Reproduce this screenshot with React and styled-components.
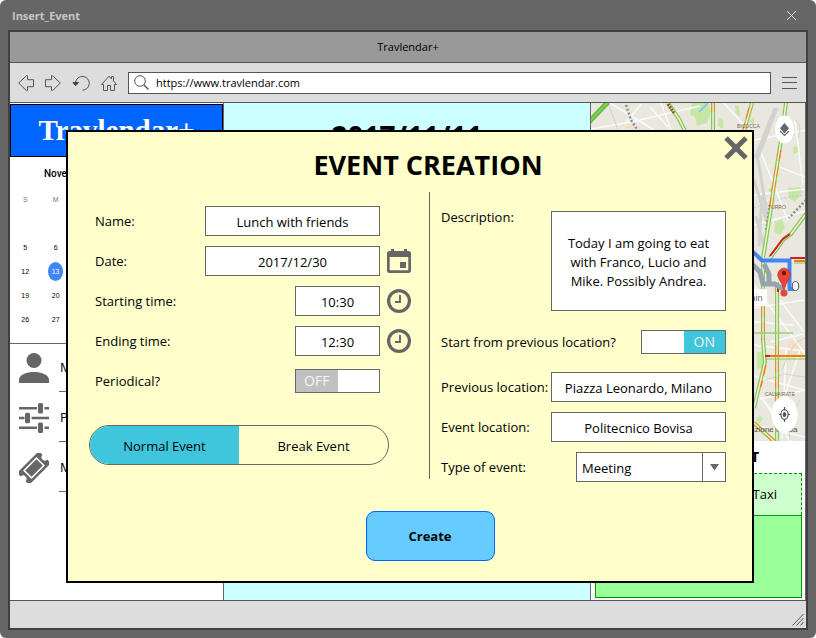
import React, { useState } from "react";
import styled, { createGlobalStyle } from "styled-components";

const INK = "#666666";
const TEAL = "#40c6dc";

const GlobalStyle = createGlobalStyle`
  *, *::before, *::after { box-sizing: border-box; }
  body { margin: 0; background: #ffffff; }
  body, button, input, select, textarea {
    font-family: "Open Sans", "Noto Sans", sans-serif;
    color: #000000;
  }
`;

/* ---------- window frame ---------- */

const Window = styled.div`
  display: flex;
  flex-direction: column;
  min-height: 100vh;
  padding: 0 8px 8px;
  background: ${INK};
  border-radius: 6px;
`;

const TitleBar = styled.header`
  display: flex;
  align-items: center;
  justify-content: space-between;
  height: 30px;
  padding: 0 11px 0 4px;
  color: #c6c6c6;
  font-size: 11px;
  font-weight: 700;
`;

const IconButton = styled.button`
  display: flex;
  padding: 0;
  border: 0;
  background: none;
  cursor: pointer;
`;

const Frame = styled.div`
  display: flex;
  flex: 1;
  flex-direction: column;
  border: 2px solid #404040;
`;

const TabBar = styled.div`
  height: 31px;
  border-bottom: 1px solid #555555;
  background: #999999;
  font-size: 11px;
  line-height: 30px;
  text-align: center;
`;

const Toolbar = styled.nav`
  display: flex;
  align-items: center;
  gap: 11px;
  height: 40px;
  padding: 0 9px 0 8px;
  border-bottom: 1px solid #555555;
  background: #dddddd;
`;

const AddressBar = styled.label`
  display: flex;
  flex: 1;
  align-items: center;
  gap: 7px;
  height: 22px;
  padding-left: 5px;
  border: 1px solid #555555;
  background: #ffffff;
`;

const AddressInput = styled.input`
  flex: 1;
  min-width: 0;
  padding: 0;
  border: 0;
  background: none;
  font-size: 11px;
  line-height: 16px;
  outline: none;
`;

const StatusBar = styled.footer`
  display: flex;
  align-items: flex-end;
  justify-content: flex-end;
  height: 28px;
  padding: 2px;
  border-top: 1px solid #555555;
  background: #dddddd;
`;

/* ---------- page behind the dialog ---------- */

const Page = styled.main`
  position: relative;
  display: grid;
  flex: 1;
  grid-template-columns: 214fr 367fr 215fr;
  background: #ccffff;
`;

const Column = styled.section`
  display: flex;
  flex-direction: column;
  min-width: 0;
  border-right: 1px solid ${INK};
  background: ${(p) => p.$fill || "#ffffff"};
`;

const Brand = styled.div`
  height: 53px;
  margin-top: 1px;
  border: 1px solid #000000;
  background: #0066ff;
  color: #ffffff;
  font-family: "Liberation Serif", serif;
  font-size: 29px;
  font-weight: 700;
  line-height: 51px;
  text-align: center;
`;

const DayTitle = styled.h2`
  margin: 13px 0 0;
  font-size: 28px;
  line-height: 40px;
  text-align: center;
`;

const CalendarPanel = styled.div`
  height: 187px;
  border-bottom: 1px solid ${INK};
`;

const Calendar = styled.table`
  width: 100%;
  border-spacing: 0;
  table-layout: fixed;
  font-family: "Liberation Sans", sans-serif;
  font-size: 7px;
  text-align: center;

  caption {
    height: 30px;
    padding-left: 34px;
    font-family: Roboto, sans-serif;
    font-size: 10px;
    font-weight: 500;
    line-height: 34px;
    text-align: left;
  }
  th { height: 24px; padding: 0; color: #777777; font-weight: 400; }
  td { height: 24px; padding: 0; }
`;

const Today = styled.span`
  display: inline-block;
  width: 15px;
  border-radius: 50%;
  background: #4285f4;
  color: #ffffff;
  line-height: 19px;
`;

const Menu = styled.ul`
  display: flex;
  flex-direction: column;
  gap: 2px;
  margin: 0;
  padding: 0 9px;
  list-style: none;
`;

const MenuItem = styled.li`
  display: flex;
  align-items: center;
  gap: 10px;
  height: 48px;

  a {
    flex: 1;
    padding-left: 1px;
    border-bottom: 1px solid ${INK};
    color: #000000;
    font-size: 13px;
    line-height: 47px;
    text-decoration: none;
  }
`;

const MapArt = styled.svg`
  display: block;
  width: 100%;
  height: 338px;
`;

const PanelTitle = styled.h3`
  margin: 6px 0;
  padding-right: 46px;
  font-size: 14px;
  line-height: 20px;
  text-align: right;
`;

const Transport = styled.div`
  display: flex;
  flex: 1;
  flex-direction: column;
  margin: 0 3px 2px 4px;
`;

const TransportMode = styled.div`
  height: 42px;
  padding-right: 24px;
  border: 1px dashed #009900;
  border-bottom: 0;
  background: #ccffcc;
  font-size: 13px;
  line-height: 40px;
  text-align: right;
`;

const TransportDetail = styled.div`
  flex: 1;
  border: 1px solid #009900;
  background: #99ff99;
`;

/* ---------- dialog ---------- */

const Overlay = styled.div`
  position: absolute;
  inset: 0;
  padding: 27px 52px 17px 56px;
`;

const Dialog = styled.form`
  display: flex;
  flex-direction: column;
  height: 100%;
  border: 2px solid #000000;
  background: #ffffcc;
`;

const DialogHeader = styled.div`
  display: flex;
  align-items: flex-start;
  height: 60px;
  padding: 4px 4px 0 64px;

  h1 {
    flex: 1;
    margin: 0;
    font-size: 27px;
    line-height: 58px;
    text-align: center;
  }
`;

const Columns = styled.div`
  display: grid;
  grid-template-columns: 362fr 322fr;
`;

const Left = styled.div`
  display: flex;
  flex-direction: column;
  gap: 10px;
  margin-bottom: 3px;
  padding: 14px 18px 0 27px;
  border-right: 1px solid ${INK};
`;

const Right = styled.div`
  display: flex;
  flex-direction: column;
  gap: 10px;
  padding: 19px 26px 0 11px;
`;

const Row = styled.div`
  display: flex;
  align-items: ${(p) => (p.$top ? "flex-start" : "center")};
  height: ${(p) => p.$height || 30}px;
`;

const Label = styled.label`
  flex: 1;
  font-size: 13px;
  line-height: ${(p) => (p.$top ? 12 : 20)}px;
  white-space: nowrap;
`;

const TextBox = styled.input`
  width: ${(p) => p.$width || 175}px;
  height: 30px;
  padding: 2px 4px 0;
  border: 1px solid ${INK};
  border-radius: 0;
  background: #ffffff;
  font-size: 13px;
  text-align: center;
`;

const TextArea = styled.textarea`
  width: 175px;
  height: 100px;
  padding: 22px 10px 0;
  border: 1px solid ${INK};
  border-radius: 0;
  font-size: 13px;
  line-height: 19px;
  text-align: center;
  resize: none;
  overflow: hidden;
`;

const Slot = styled.div`
  display: flex;
  justify-content: flex-end;
  width: 31px;
`;

const Switch = styled.label`
  display: grid;
  grid-template-columns: 1fr 1fr;
  width: 85px;
  height: 24px;
  border: 1px solid ${INK};
  background: #ffffff;
  cursor: pointer;

  span {
    grid-column: ${(p) => (p.$on ? 2 : 1)};
    background: ${(p) => (p.$on ? TEAL : "#c0c0c0")};
    color: #f4f4f4;
    font-size: 14px;
    line-height: 22px;
    text-align: center;
  }
`;

const HiddenInput = styled.input`
  position: absolute;
  width: 1px;
  height: 1px;
  margin: 0;
  opacity: 0;
`;

const Segments = styled.fieldset`
  display: grid;
  grid-template-columns: 1fr 1fr;
  width: 300px;
  height: 40px;
  margin: 19px 0 12px -6px;
  padding: 0;
  overflow: hidden;
  border: 1px solid ${INK};
  border-radius: 20px;
`;

const Segment = styled.label`
  background: ${(p) => (p.$active ? TEAL : "transparent")};
  font-size: 13px;
  line-height: 40px;
  text-align: center;
  cursor: pointer;
`;

const SelectBox = styled.div`
  position: relative;
  width: 150px;
  height: 30px;

  select {
    width: 100%;
    height: 100%;
    padding: 2px 28px 0 5px;
    appearance: none;
    border: 1px solid ${INK};
    border-radius: 0;
    background: #ffffff;
    font-size: 13px;
  }
`;

const SelectArrow = styled.span`
  position: absolute;
  top: 0;
  right: 0;
  bottom: 0;
  display: flex;
  align-items: center;
  justify-content: center;
  width: 24px;
  border-left: 1px solid ${INK};
  pointer-events: none;
`;

const CreateButton = styled.button`
  align-self: center;
  width: 129px;
  height: 50px;
  margin: 29px 0 0 40px;
  border: 1px solid #0066ff;
  border-radius: 9px;
  background: #66ccff;
  font-size: 13px;
  font-weight: 700;
  cursor: pointer;
`;

/* ---------- icons ---------- */

const Stroke = ({ w, h, children, color = "#555555" }) => (
  <svg width={w} height={h} viewBox={`0 0 ${w} ${h}`} fill="none" stroke={color} aria-hidden="true">
    {children}
  </svg>
);

const BackIcon = () => (
  <Stroke w={16} h={16}>
    <path d="M.7 8 8.500 .7h1v4h6v7h-6v4h-1z" />
  </Stroke>
);

const ForwardIcon = () => (
  <Stroke w={16} h={16}>
    <path d="M15.300 8 7.500 .7h-1v4h-6v7h6v4h1z" />
  </Stroke>
);

const ReloadIcon = () => (
  <Stroke w={18} h={16}>
    <path d="M3.500 7.500a6.900 6.900 0 1 1 7 7.700" />
    <path d="M1 7.500h5.500L3.700 10.700z" fill="#444444" stroke="#444444" />
  </Stroke>
);

const HomeIcon = () => (
  <Stroke w={16} h={16}>
    <path d="M2.500 9.500v6h4v-5h3v5h4v-6M.5 9.500h2M13.500 9.500h2M.5 9.500 8 1.300 10.500 4V1.500h2V6l3 3.500" />
  </Stroke>
);

const SearchIcon = () => (
  <Stroke w={15} h={15}>
    <circle cx="6" cy="6" r="5.300" />
    <path d="m9.800 9.800 4.700 4.700" strokeWidth="1.300" />
  </Stroke>
);

const MenuIcon = () => (
  <Stroke w={15} h={12}>
    <path d="M0 .5h15M0 5.500h15M0 11.500h15" />
  </Stroke>
);

const ThinClose = () => (
  <Stroke w={11} h={11} color="#e0e0e0">
    <path d="m1 1 9 9M10 1l-9 9" />
  </Stroke>
);

const BigClose = () => (
  <Stroke w={24} h={24} color={INK}>
    <path d="m2 2 20 20M22 2 2 22" strokeWidth="5" />
  </Stroke>
);

const GripIcon = () => (
  <Stroke w={12} h={13}>
    <path d="M.5 12.500 11.500 1M4.500 12.500l7-7.500M8.500 12.500l3-3.500" />
  </Stroke>
);

const DateIcon = () => (
  <svg width="24" height="24" viewBox="0 0 24 24" fill={INK} aria-hidden="true">
    <path
      fillRule="evenodd"
      d="M4 0h3v2h10V0h3v2h1.500A2.500 2.500 0 0 1 24 4.500v17a2.500 2.500 0 0 1-2.500 2.500h-19A2.500 2.500 0 0 1 0 21.500v-17A2.500 2.500 0 0 1 2.500 2H4zM2.700 8v13.300h18.600V8z"
    />
    <path d="M13 13h6v6h-6z" />
  </svg>
);

const ClockIcon = () => (
  <svg width="24" height="24" viewBox="0 0 24 24" fill="none" stroke={INK} aria-hidden="true">
    <circle cx="12" cy="12" r="10.400" strokeWidth="3.200" />
    <path d="M13 6v7H8" strokeWidth="1.900" />
  </svg>
);

const PersonIcon = () => (
  <svg width="30" height="30" viewBox="0 0 30 30" fill={INK} aria-hidden="true">
    <circle cx="15" cy="7.500" r="7.500" />
    <path d="M0 30v-3c0-5.500 8-8 15-8s15 2.500 15 8v3z" />
  </svg>
);

const SlidersIcon = () => (
  <svg width="30" height="30" viewBox="0 0 30 30" fill={INK} aria-hidden="true">
    <path d="M0 4h18v2.500H0zM25.500 4H30v2.500h-4.500zM0 13.700h5.500v2.500H0zM12.500 13.700H30v2.500H12.500zM0 23.500h18V26H0zM25.500 23.500H30V26h-4.500z" />
    <rect x="19" width="5" height="10.500" rx="1.500" />
    <rect x="6" y="9.700" width="5" height="10.500" rx="1.500" />
    <rect x="19" y="19.500" width="5" height="10.500" rx="1.500" />
  </svg>
);

const TicketIcon = () => (
  <svg width="30" height="30" viewBox="0 0 30 30" fill={INK} aria-hidden="true">
    <g transform="rotate(-45 15 15)">
      <path
        fillRule="evenodd"
        d="M1.500 6.500h27a1.800 1.800 0 0 1 1.800 1.800v3.400a3.300 3.300 0 0 0 0 6.600v3.400a1.800 1.800 0 0 1-1.800 1.800h-27a1.800 1.800 0 0 1-1.800-1.800v-3.400a3.300 3.300 0 0 0 0-6.600V8.300a1.800 1.800 0 0 1 1.800-1.800zM5.500 9v12h19V9z"
      />
      <path d="M7 10.500h16v9H7z" />
    </g>
  </svg>
);

const ArrowDown = () => (
  <svg width="9" height="7" viewBox="0 0 9 7" fill={INK} aria-hidden="true">
    <path d="M0 0h9L4.500 6.500z" />
  </svg>
);

/* ---------- city map ---------- */

const Road = ({ d, traffic = "" }) => (
  <g fill="none">
    <path d={d} stroke="#84ca50" strokeWidth="4" />
    {traffic && <path d={traffic} stroke="#f07d02" strokeWidth="3" strokeDasharray="11 5" />}
    <path d={d} stroke="#f3f0e4" strokeWidth="1.500" />
  </g>
);

const CityMap = () => (
  <MapArt viewBox="591 103 214 338" preserveAspectRatio="xMaxYMin slice" role="img" aria-label="Map">
    <rect x="400" y="103" width="500" height="400" fill="#e9e7de" />
    <g fill="#c5e6a4">
      <path d="M692 103h16l3 8-4 12-10 3-2-9-5-3zM735 105l4 1 1 11-4-4zM719 118l4 2 0 9-5-3zM749 121l5-4v9zM788 188l12-1 3 5-8 10-6-4zM775 222l7-3 3 8-4 8-7-3zM793 147l5-1v6l-5 2zM757 352h8v15l-8 2zM768 190l5-4-1 9zM756 419l4-4 3 4-4 5z" />
    </g>
    <g fill="#f2dfc6">
      <path d="M625 124h8v5h-8zM788 340h14v15h-14zM773 285h9v9h-9z" />
    </g>
    <g fill="none" stroke="#fafafa" strokeWidth="1.500">
      <path d="M591 129 631 122 700 106M610 103l44 27M661 103l10 27M650 107l18 20M641 104l-16 20M724 103l20 22M754 140l52-10M795 120l8 65M775 165l30 12M754 195l52-6M754 225l52-14M760 150l28 70M754 285l52 70M754 308l50-8M754 322l40 3M780 300l24 32M770 342l34-8M754 345l52 6M754 376l50 14M786 350l-4 88M754 400l52-10M800 350l-20 60M754 425l51 12M760 395l30 46M755 390l20 24" />
    </g>
    <g fill="none" stroke="#d3d2d0">
      <path d="M775 108l-20 50M777 108l-20 52M758 160l10 60M754 180l14 45M756 216l8 30M762 196l-3 50" strokeWidth="3" />
      <path d="M608 103l10 27M795 120q8 5 3 18M765 380l20-6 20 3M782 370q10-30 23-32M800 400q-14 20-10 40" strokeWidth="1" />
    </g>
    <g fill="none" stroke="#8e8e8e" strokeDasharray="2 2">
      <path d="M626 105 631 120 638 131M806 200l-17 18M766 230l4-25" strokeWidth="2.500" />
    </g>
    <path d="M754 208l30-10 22-3" fill="none" stroke="#a9cfe8" strokeDasharray="2 2" />
    <path d="m699 112 9-9" stroke="#8fc4f5" strokeWidth="2" />
    <path d="m589 122 19-20" stroke="#5fba3d" strokeWidth="5" />
    <path d="m589 122 19-20" stroke="#85cf5f" strokeWidth="2" />
    <Road d="M668 103 679 119 685 131" />
    <path d="m668 104 6 9" stroke="#8a5a2a" strokeWidth="3" strokeDasharray="2 1" />
    <Road d="M713 103v28" traffic="M713 103v9" />
    <Road d="M752 103 744 131" traffic="M750 108l-6 22" />
    <Road d="M786 103 781 140 774 185 770 215 763 258" traffic="M780 150 774 185 770 210" />
    <Road d="M763 262V340L765 362 754 408" traffic="M763 290v50M765 365l-5 22" />
    <Road d="M777 282V441" traffic="M777 345v55" />
    <Road d="M770 258 784 239 791 234 806 214" />
    <Road d="M754 423l22 20" traffic="M754 423l22 20" />
    <path d="m770 256 13-17 7-5" fill="none" stroke="#d31f1f" strokeWidth="2" />
    <path d="M754 333h39" stroke="#9ad077" strokeWidth="1.500" />
    <path d="M765 356h41M794 261h12" stroke="#f07d02" strokeWidth="2" />
    <path d="M765 359h41M794 263h12" stroke="#84ca50" strokeWidth="1" />
    <path d="M790 258h16M765 356h5M778 287v5" stroke="#d31f1f" strokeWidth="2" />
    <path d="M752 264l8 8 3 12 12 0 8 5M764 264l5 10v9" fill="none" stroke="#95a3ae" strokeWidth="5" />
    <path d="M752 251 762 260.500H789.500V289H795" fill="none" stroke="#4285f4" strokeWidth="4" />
    <g fill="#7a675c" fontFamily="Liberation Sans, sans-serif" fontSize="5">
      <text x="737" y="128">BICOCCA</text>
      <text x="768" y="209">TURRO</text>
      <text x="765" y="396">CALVAIRATE</text>
      <text x="732" y="432" fill="#5f4b43" fontSize="8">Fondazione Prada</text>
    </g>
    <circle cx="784" cy="293" r="3.500" fill="#e0493f" />
    <path d="M784 290q-2-7-5-11a6 7 0 1 1 10 0q-3 4-5 11z" fill="#ea4335" stroke="#b8322a" strokeWidth=".7" />
    <circle cx="784" cy="273" r="2.200" fill="#751510" />
    <ellipse cx="795.500" cy="286" rx="3.200" ry="4.500" fill="#ffffff" stroke="#555555" />
    <path d="M740 289h27v17h-27z" fill="#ffffff" />
    <text x="748" y="301" fill="#666666" fontFamily="Liberation Sans, sans-serif" fontSize="9">min</text>
    <ellipse cx="784.500" cy="129.500" rx="9.500" ry="14" fill="#ffffff" />
    <path d="m784.500 123 4.500 5.300-4.500 5.300-4.500-5.300z" fill={INK} />
    <path d="m780 131 4.500 4.500 4.500-4.500" fill="none" stroke={INK} strokeWidth="1.200" />
    <ellipse cx="784.500" cy="414.500" rx="13" ry="18" fill="#ffffff" />
    <g fill="none" stroke="#555555" strokeWidth="1.200">
      <ellipse cx="784.500" cy="414.500" rx="3.600" ry="4.800" />
      <path d="M784.500 407v3M784.500 419v3M779 414.500h2M788 414.500h2" />
    </g>
    <ellipse cx="784.500" cy="414.500" rx="1.800" ry="2.600" fill="#555555" />
  </MapArt>
);

const WEEKS = [
  ["", "", "", 1, 2, 3, 4],
  [5, 6, 7, 8, 9, 10, 11],
  [12, 13, 14, 15, 16, 17, 18],
  [19, 20, 21, 22, 23, 24, 25],
  [26, 27, 28, 29, 30, "", ""],
];

const MENU = [
  { label: "My profile", Icon: PersonIcon },
  { label: "Preferences", Icon: SlidersIcon },
  { label: "My tickets", Icon: TicketIcon },
];

function Toggle({ id, label, value, onChange }) {
  return (
    <Switch $on={value}>
      <HiddenInput id={id} type="checkbox" role="switch" aria-label={label} checked={value} onChange={() => onChange(!value)} />
      <span>{value ? "ON" : "OFF"}</span>
    </Switch>
  );
}

function Field({ id, label, value, width, action }) {
  return (
    <Row>
      <Label htmlFor={id}>{label}</Label>
      <TextBox id={id} defaultValue={value} $width={width} />
      {action}
    </Row>
  );
}

const Action = ({ label, children }) => (
  <Slot>
    <IconButton type="button" aria-label={label}>{children}</IconButton>
  </Slot>
);

function EventDialog() {
  const [periodical, setPeriodical] = useState(false);
  const [fromPrevious, setFromPrevious] = useState(true);
  const [kind, setKind] = useState("Normal Event");

  return (
    <Dialog role="dialog" aria-labelledby="dialog-title" onSubmit={(e) => e.preventDefault()}>
      <DialogHeader>
        <h1 id="dialog-title">EVENT CREATION</h1>
        <IconButton type="button" aria-label="Close dialog"><BigClose /></IconButton>
      </DialogHeader>
      <Columns>
        <Left>
          <Field id="name" label="Name:" value="Lunch with friends" action={<Slot />} />
          <Field id="date" label="Date:" value="2017/12/30" action={<Action label="Pick date"><DateIcon /></Action>} />
          <Field id="start" label="Starting time:" value="10:30" width={85} action={<Action label="Pick starting time"><ClockIcon /></Action>} />
          <Field id="end" label="Ending time:" value="12:30" width={85} action={<Action label="Pick ending time"><ClockIcon /></Action>} />
          <Row>
            <Label htmlFor="periodical">Periodical?</Label>
            <Toggle id="periodical" label="Periodical?" value={periodical} onChange={setPeriodical} />
            <Slot />
          </Row>
          <Segments aria-label="Kind of event">
            {["Normal Event", "Break Event"].map((name) => (
              <Segment key={name} $active={kind === name}>
                <HiddenInput type="radio" name="kind" checked={kind === name} onChange={() => setKind(name)} />
                {name}
              </Segment>
            ))}
          </Segments>
        </Left>
        <Right>
          <Row $top $height={100}>
            <Label $top htmlFor="description">Description:</Label>
            <TextArea id="description" defaultValue="Today I am going to eat with Franco, Lucio and Mike. Possibly Andrea." />
          </Row>
          <Row $height={41}>
            <Label htmlFor="from-previous">Start from previous location?</Label>
            <Toggle id="from-previous" label="Start from previous location?" value={fromPrevious} onChange={setFromPrevious} />
          </Row>
          <Field id="previous" label="Previous location:" value="Piazza Leonardo, Milano" />
          <Field id="location" label="Event location:" value="Politecnico Bovisa" />
          <Row>
            <Label htmlFor="type">Type of event:</Label>
            <SelectBox>
              <select id="type" defaultValue="Meeting">
                <option>Meeting</option>
              </select>
              <SelectArrow><ArrowDown /></SelectArrow>
            </SelectBox>
          </Row>
        </Right>
      </Columns>
      <CreateButton type="submit">Create</CreateButton>
    </Dialog>
  );
}

export default function App() {
  return (
    <>
      <GlobalStyle />
      <Window>
        <TitleBar>
          Insert_Event
          <IconButton aria-label="Close window"><ThinClose /></IconButton>
        </TitleBar>
        <Frame>
          <TabBar>Travlendar+</TabBar>
          <Toolbar>
            <IconButton aria-label="Back"><BackIcon /></IconButton>
            <IconButton aria-label="Forward"><ForwardIcon /></IconButton>
            <IconButton aria-label="Reload"><ReloadIcon /></IconButton>
            <IconButton aria-label="Home"><HomeIcon /></IconButton>
            <AddressBar>
              <SearchIcon />
              <AddressInput aria-label="Address" defaultValue="https://www.travlendar.com" />
            </AddressBar>
            <IconButton aria-label="Menu"><MenuIcon /></IconButton>
          </Toolbar>
          <Page>
            <Column>
              <Brand>Travlendar+</Brand>
              <CalendarPanel>
                <Calendar>
                  <caption>November</caption>
                  <thead>
                    <tr>{["S", "M", "T", "W", "T", "F", "S"].map((d, i) => <th key={i}>{d}</th>)}</tr>
                  </thead>
                  <tbody>
                    {WEEKS.map((week, w) => (
                      <tr key={w}>
                        {week.map((day, d) => <td key={d}>{day === 13 ? <Today>{day}</Today> : day}</td>)}
                      </tr>
                    ))}
                  </tbody>
                </Calendar>
              </CalendarPanel>
              <Menu>
                {MENU.map(({ label, Icon }) => (
                  <MenuItem key={label}><Icon /><a href="#menu">{label}</a></MenuItem>
                ))}
              </Menu>
            </Column>
            <Column $fill="#ccffff">
              <DayTitle>2017/11/11</DayTitle>
            </Column>
            <Column>
              <CityMap />
              <PanelTitle>NEXT EVENT</PanelTitle>
              <Transport>
                <TransportMode>Taxi</TransportMode>
                <TransportDetail />
              </Transport>
            </Column>
            <Overlay><EventDialog /></Overlay>
          </Page>
          <StatusBar><GripIcon /></StatusBar>
        </Frame>
      </Window>
    </>
  );
}
